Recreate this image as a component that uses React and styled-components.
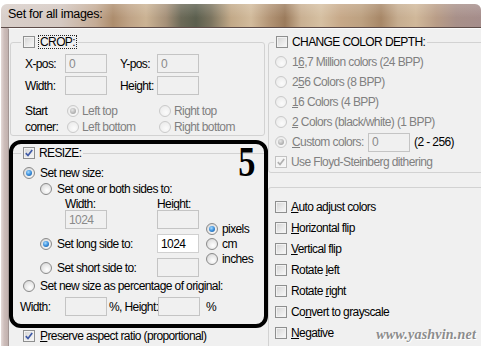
import React from 'react';
import styled, { createGlobalStyle } from 'styled-components';

const Global = createGlobalStyle`
  html, body { margin: 0; padding: 0; background: #fff; }
  body {
    font-family: "Liberation Sans", Arial, sans-serif;
    font-size: 12px;
    letter-spacing: -0.6px;
    color: #000;
  }
  #root { width: 500px; height: 349px; overflow: hidden; }
`;

const DIS = '#808080';

const Window = styled.div`
  margin: 4px 0 0 1px;
  width: 480px;
  height: 342px;
  display: flex;
  flex-direction: column;
  border-radius: 6px 6px 0 0;
  overflow: hidden;
`;

const TitleBar = styled.div`
  flex: none;
  height: 24px;
  box-sizing: border-box;
  padding: 3px 0 0 7px;
  font-size: 12.5px;
  line-height: 14px;
  letter-spacing: -0.3px;
  border-bottom: 1px solid #5d4c49;
  background:
    linear-gradient(180deg, rgba(255,255,255,0.18), rgba(255,255,255,0) 60%),
    linear-gradient(90deg,
      #d9cfca 0px, #d4c8c1 60px, #c4ab95 95px, #ad8d6d 112px, #bfa386 128px,
      #cbb394 145px, #a59078 165px, #6c6a58 180px, #5b5f4e 195px, #7b745f 210px,
      #c2a988 230px, #d2bb9c 250px, #b39576 268px, #9b7b5c 284px, #c9b092 300px,
      #d6c0a2 320px, #c6a888 340px, #bda181 360px, #a78767 380px, #c6ad90 397px,
      #d0b89a 415px, #b99d87 435px, #a89089 455px, #a58d8b 480px);
`;

const Body = styled.div`
  flex: 1;
  display: flex;
  min-height: 0;
`;

const Frame = styled.div`
  flex: none;
  width: 7px;
  background: linear-gradient(90deg, #e4dad8 0%, #cdbdba 45%, #c1b1ae 100%);
`;

const Panel = styled.div`
  flex: 1;
  position: relative;
  overflow: hidden;
  box-sizing: border-box;
  background: #f0f0f0;
  border-top: 1px solid #fbfbfb;
  border-left: 1px solid #a29593;
  padding-top: 6px;
  display: grid;
  grid-template-columns: 259px 1fr;
  align-items: start;
`;

const LeftCol = styled.div`
  display: flex;
  flex-direction: column;
`;

const RightCol = styled.div`
  display: flex;
  flex-direction: column;
  margin-right: -10px;
`;

const Group = styled.fieldset`
  margin: ${p => p.$m ?? '0'};
  padding: ${p => p.$p ?? '0'};
  border: 1px solid #d2d2d2;
  border-radius: 3px;
  min-width: 0;
  height: ${p => (p.$h ? `${p.$h}px` : 'auto')};
  box-sizing: border-box;
`;

const Legend = styled.legend`
  display: flex;
  align-items: center;
  gap: 4px;
  height: 14px;
  line-height: 14px;
  padding: 0 2px;
  margin-left: ${p => p.$ml ?? 0}px;
  white-space: nowrap;
`;

const Focus = styled.span`
  outline: 1px dotted #222;
  outline-offset: 0;
  padding: 0 1px;
  line-height: 12px;
`;

const Box = styled.span`
  flex: none;
  box-sizing: border-box;
  width: 12px;
  height: 12px;
  border: 1px solid ${p => (p.$disabled ? '#c2c2c2' : '#8e8f8f')};
  background: ${p =>
    p.$disabled
      ? '#f4f4f4'
      : 'linear-gradient(135deg, #d3d3d3 0%, #e9e9e9 55%, #f9f9f9 100%)'};
  box-shadow: inset 0 0 0 1px ${p => (p.$disabled ? '#f7f7f7' : '#f2f2f2')};
  display: inline-flex;
  align-items: center;
  justify-content: center;
`;

function CheckBox({ checked, disabled }) {
  return (
    <Box $disabled={disabled}>
      {checked && (
        <svg width="8" height="8" viewBox="0 0 8 8">
          <path
            d="M0.8 4.2 L3 6.5 L7.2 1"
            fill="none"
            stroke={disabled ? '#b0b0b0' : '#3f5aa6'}
            strokeWidth="1.7"
          />
        </svg>
      )}
    </Box>
  );
}

const Radio = styled.span`
  flex: none;
  box-sizing: border-box;
  width: 12px;
  height: 12px;
  border-radius: 50%;
  border: 1px solid ${p => (p.$disabled ? '#cacaca' : '#8a8a8a')};
  background: ${p =>
    p.$disabled
      ? 'radial-gradient(circle at 60% 65%, #fbfbfb, #ededed 70%, #e0e0e0)'
      : 'radial-gradient(circle at 60% 65%, #ffffff, #e4e4e4 60%, #c6c6c6)'};
  display: inline-flex;
  align-items: center;
  justify-content: center;
  &::after {
    content: '';
    width: 6px;
    height: 6px;
    border-radius: 50%;
    display: ${p => (p.$checked ? 'block' : 'none')};
    background: ${p =>
      p.$disabled
        ? 'radial-gradient(circle at 40% 35%, #e6e6e6, #acacac 70%, #8e8e8e)'
        : 'radial-gradient(circle at 40% 35%, #a8dcff, #3b8fdc 50%, #164f92)'};
  }
`;

const Txt = styled.span`
  color: ${p => (p.$dis ? DIS : '#000')};
  white-space: nowrap;
`;

const Row = styled.div`
  display: flex;
  align-items: center;
  height: ${p => p.$h ?? 16}px;
  margin-top: ${p => p.$mt ?? 0}px;
  margin-left: ${p => p.$ml ?? 0}px;
  gap: ${p => p.$gap ?? 5}px;
  white-space: nowrap;
`;

const Field = styled.input.attrs({ readOnly: true, type: 'text' })`
  flex: none;
  box-sizing: border-box;
  width: ${p => p.$w ?? 42}px;
  height: 19px;
  margin: 0;
  padding: 0 3px;
  font: inherit;
  letter-spacing: inherit;
  color: ${p => (p.$dis ? '#8a8a8a' : '#000')};
  background: ${p => (p.$white ? '#fff' : '#f0f0f0')};
  border: 1px solid ${p => (p.$white ? '#d0d0d0' : '#c4c4c4')};
  border-radius: 0;
  outline: none;
`;

/* CROP */
const CropGrid = styled.div`
  display: grid;
  grid-template-columns: 40px 55px 37px 42px;
  grid-auto-rows: 19px;
  row-gap: 3px;
  align-items: center;
`;

const Corner = styled.div`
  display: flex;
  margin-top: 8px;
`;

const CornerLabel = styled.div`
  width: 42px;
  line-height: 16px;
`;

const CornerGrid = styled.div`
  display: grid;
  grid-template-columns: 92px auto;
  grid-auto-rows: 16px;
`;

/* RESIZE */
const Highlight = styled.div`
  position: relative;
  margin-top: 4px;
  border: 4px solid #000;
  border-radius: 12px;
  padding-top: 2px;
`;

const Badge = styled.span`
  position: absolute;
  top: 1px;
  right: 9px;
  font-family: "Liberation Serif", "Times New Roman", serif;
  font-weight: bold;
  font-size: 43px;
  line-height: 34px;
  height: 34px;
  display: flex;
  align-items: center;
  letter-spacing: 0;
  transform: scaleX(0.8);
  transform-origin: right top;
`;

const ResizeGroup = styled.fieldset`
  margin: 0;
  padding: 5px 0 8px 10px;
  border: none;
  border-top: 1px solid #d2d2d2;
  min-width: 0;
`;

const SubBlock = styled.div`
  display: flex;
  margin-left: 17px;
`;

const SizeCol = styled.div`
  display: flex;
  flex-direction: column;
`;

const SizeRow = styled.div`
  display: flex;
  align-items: center;
  height: ${p => p.$h ?? 19}px;
  margin-top: ${p => p.$mt ?? 0}px;
  margin-left: ${p => p.$ml ?? 0}px;
`;

const Cell = styled.div`
  flex: none;
  width: ${p => p.$w}px;
  padding-left: ${p => p.$pl ?? 0}px;
  box-sizing: border-box;
  display: flex;
  align-items: center;
  gap: 5px;
`;

const Units = styled.div`
  display: flex;
  flex-direction: column;
  margin-left: 7px;
  padding-top: 40px;
`;

const Watermark = styled.span`
  position: absolute;
  right: 5px;
  bottom: 4px;
  font-family: "Liberation Serif", "Times New Roman", serif;
  font-style: italic;
  font-weight: bold;
  font-size: 14px;
  line-height: 14px;
  letter-spacing: 0.2px;
  color: #8c8c8c;
  text-shadow: 1px 1px 0 #ffffff;
`;

export default function App() {
  return (
    <>
      <Global />
      <Window>
        <TitleBar>Set for all images:</TitleBar>
        <Body>
          <Frame />
          <Panel>
            <LeftCol>
              <Group $m="0 3px 0 1px" $p="5px 0 0 14px">
                <Legend $ml={-4}>
                  <CheckBox />
                  <Focus>CROP:</Focus>
                </Legend>
                <CropGrid>
                  <Txt>X-pos:</Txt>
                  <Field $dis value="0" />
                  <Txt>Y-pos:</Txt>
                  <Field $dis value="0" />
                  <Txt>Width:</Txt>
                  <Field $dis value="" />
                  <Txt>Height:</Txt>
                  <Field $dis value="" />
                </CropGrid>
                <Corner>
                  <CornerLabel>
                    Start
                    <br />
                    corner:
                  </CornerLabel>
                  <CornerGrid>
                    <Row $gap={3}>
                      <Radio $checked $disabled />
                      <Txt $dis>Left top</Txt>
                    </Row>
                    <Row $gap={3}>
                      <Radio $disabled />
                      <Txt $dis>Right top</Txt>
                    </Row>
                    <Row $gap={3}>
                      <Radio $disabled />
                      <Txt $dis>Left bottom</Txt>
                    </Row>
                    <Row $gap={3}>
                      <Radio $disabled />
                      <Txt $dis>Right bottom</Txt>
                    </Row>
                  </CornerGrid>
                </Corner>
              </Group>

              <Highlight>
                <Badge>5</Badge>
                <ResizeGroup>
                  <Legend $ml={-2}>
                    <CheckBox checked />
                    <span>RESIZE:</span>
                  </Legend>
                  <Row>
                    <Radio $checked />
                    <Txt>Set new size:</Txt>
                  </Row>
                  <SubBlock>
                    <SizeCol>
                      <SizeRow $h={16}>
                        <Cell $w={159}>
                          <Radio />
                          <Txt>Set one or both sides to:</Txt>
                        </Cell>
                      </SizeRow>
                      <SizeRow $h={13}>
                        <Cell $w={117} $pl={25}>
                          <Txt>Width:</Txt>
                        </Cell>
                        <Txt>Height:</Txt>
                      </SizeRow>
                      <SizeRow>
                        <Cell $w={117} $pl={25}>
                          <Field $dis value="1024" />
                        </Cell>
                        <Field value="" />
                      </SizeRow>
                      <SizeRow $mt={5}>
                        <Cell $w={117}>
                          <Radio $checked />
                          <Txt>Set long side to:</Txt>
                        </Cell>
                        <Field $white value="1024" />
                      </SizeRow>
                      <SizeRow $mt={5}>
                        <Cell $w={117}>
                          <Radio />
                          <Txt>Set short side to:</Txt>
                        </Cell>
                        <Field value="" />
                      </SizeRow>
                    </SizeCol>
                    <Units>
                      <Row $h={15} $gap={4}>
                        <Radio $checked />
                        <Txt>pixels</Txt>
                      </Row>
                      <Row $h={15} $gap={4}>
                        <Radio />
                        <Txt>cm</Txt>
                      </Row>
                      <Row $h={15} $gap={4}>
                        <Radio />
                        <Txt>inches</Txt>
                      </Row>
                    </Units>
                  </SubBlock>
                  <Row $mt={1}>
                    <Radio />
                    <Txt>Set new size as percentage of original:</Txt>
                  </Row>
                  <SizeRow $mt={3} $ml={-3}>
                    <Cell $w={45}>
                      <Txt>Width:</Txt>
                    </Cell>
                    <Field value="" />
                    <Cell $w={51} $pl={2}>
                      <Txt>%, Height:</Txt>
                    </Cell>
                    <Field value="" />
                    <Cell $w={20} $pl={6}>
                      <Txt>%</Txt>
                    </Cell>
                  </SizeRow>
                </ResizeGroup>
              </Highlight>

              <Row $h={14} $mt={1} $ml={14}>
                <CheckBox checked />
                <Txt>
                  <u>P</u>reserve aspect ratio (proportional)
                </Txt>
              </Row>
            </LeftCol>

            <RightCol>
              <Group $p="3px 0 0 6px">
                <Legend $ml={-1}>
                  <CheckBox />
                  <span>CHANGE COLOR DEPTH:</span>
                </Legend>
                <Row $h={20}>
                  <Radio $disabled />
                  <Txt $dis>
                    1<u>6</u>,7 Million colors (24 BPP)
                  </Txt>
                </Row>
                <Row $h={20}>
                  <Radio $disabled />
                  <Txt $dis>
                    2<u>5</u>6 Colors (8 BPP)
                  </Txt>
                </Row>
                <Row $h={20}>
                  <Radio $disabled />
                  <Txt $dis>
                    <u>1</u>6 Colors (4 BPP)
                  </Txt>
                </Row>
                <Row $h={20}>
                  <Radio $disabled />
                  <Txt $dis>
                    <u>2</u> Colors (black/white) (1 BPP)
                  </Txt>
                </Row>
                <Row $h={20}>
                  <Radio $checked $disabled />
                  <Txt $dis style={{ width: 76 }}>
                    <u>C</u>ustom colors:
                  </Txt>
                  <Field $dis value="0" style={{ marginLeft: -5 }} />
                  <Txt style={{ marginLeft: -1 }}>(2 - 256)</Txt>
                </Row>
                <Row $h={20} $gap={4}>
                  <CheckBox checked disabled />
                  <Txt $dis>Use Floyd-Steinberg dithering</Txt>
                </Row>
              </Group>

              <Group $m="14px 0 0 0" $p="8px 0 0 6px" $h={200}>
                <Row $h={21} $gap={4}>
                  <CheckBox />
                  <Txt>
                    <u>A</u>uto adjust colors
                  </Txt>
                </Row>
                <Row $h={21} $gap={4}>
                  <CheckBox />
                  <Txt>
                    <u>H</u>orizontal flip
                  </Txt>
                </Row>
                <Row $h={21} $gap={4}>
                  <CheckBox />
                  <Txt>
                    <u>V</u>ertical flip
                  </Txt>
                </Row>
                <Row $h={21} $gap={4}>
                  <CheckBox />
                  <Txt>
                    Rotate <u>l</u>eft
                  </Txt>
                </Row>
                <Row $h={21} $gap={4}>
                  <CheckBox />
                  <Txt>
                    Rotate <u>r</u>ight
                  </Txt>
                </Row>
                <Row $h={21} $gap={4}>
                  <CheckBox />
                  <Txt>
                    Co<u>n</u>vert to grayscale
                  </Txt>
                </Row>
                <Row $h={21} $gap={4}>
                  <CheckBox />
                  <Txt>
                    <u>N</u>egative
                  </Txt>
                </Row>
              </Group>
            </RightCol>
            <Watermark>www.yashvin.net</Watermark>
          </Panel>
        </Body>
      </Window>
    </>
  );
}
